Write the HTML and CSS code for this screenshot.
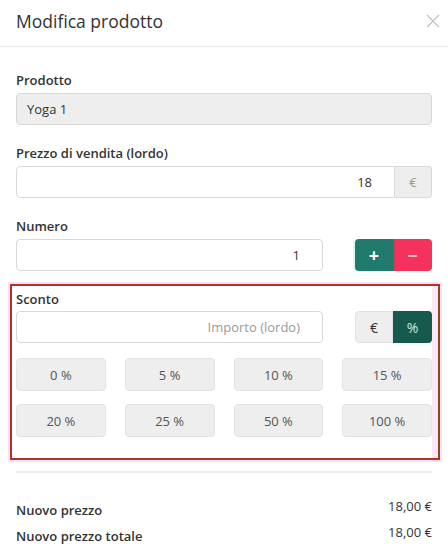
FILE: index.html
```html
<!DOCTYPE html>
<html lang="it">
<head>
    <meta charset="UTF-8">
    <meta name="viewport" content="width=device-width, initial-scale=1.0">
    <title>Modifica prodotto</title>
    <link rel="stylesheet" href="styles.css">
</head>
<body>
    <div class="modal">
        <div class="modal-header">
            <h2 class="modal-title">Modifica prodotto</h2>
            <button class="close-btn" aria-label="Chiudi">
                <svg width="14" height="14" viewBox="0 0 14 14">
                    <path d="M1 1 L13 13 M13 1 L1 13" stroke="#c4c4c4" stroke-width="1.4" fill="none"/>
                </svg>
            </button>
        </div>

        <div class="modal-body">
            <div class="form-group">
                <label class="form-label">Prodotto</label>
                <div class="input readonly">Yoga 1</div>
            </div>

            <div class="form-group">
                <label class="form-label">Prezzo di vendita (lordo)</label>
                <div class="input-group">
                    <input class="input right" type="text" value="18">
                    <span class="addon">€</span>
                </div>
            </div>

            <div class="form-group">
                <label class="form-label">Numero</label>
                <div class="row">
                    <input class="input right" type="text" value="1">
                    <div class="btn-pair">
                        <button class="btn btn-plus">+</button>
                        <button class="btn btn-minus">&minus;</button>
                    </div>
                </div>
            </div>

            <div class="form-group sconto">
                <label class="form-label">Sconto</label>
                <div class="row">
                    <input class="input right" type="text" placeholder="Importo (lordo)">
                    <div class="btn-pair">
                        <button class="btn btn-euro">€</button>
                        <button class="btn btn-percent">%</button>
                    </div>
                </div>
                <div class="presets">
                    <button class="preset">0 %</button>
                    <button class="preset">5 %</button>
                    <button class="preset">10 %</button>
                    <button class="preset">15 %</button>
                    <button class="preset">20 %</button>
                    <button class="preset">25 %</button>
                    <button class="preset">50 %</button>
                    <button class="preset">100 %</button>
                </div>
            </div>

            <div class="totals">
                <div class="total-row">
                    <span>Nuovo prezzo</span>
                    <span class="total-value">18,00 €</span>
                </div>
                <div class="total-row">
                    <span>Nuovo prezzo totale</span>
                    <span class="total-value">18,00 €</span>
                </div>
            </div>
        </div>
    </div>
</body>
</html>
```

FILE: styles.css
```css
* {
    box-sizing: border-box;
}
body {
    margin: 0;
    font-family: "Open Sans", Arial, sans-serif;
    color: #333;
    background: white;
}
.modal-header {
    display: flex;
    align-items: center;
    justify-content: space-between;
    height: 47px;
    padding: 0 8px 5px 16px;
    border-bottom: 1px solid #e8e8e8;
}
.modal-title {
    margin: 0;
    font-size: 17.5px;
    font-weight: 400;
    color: #333;
}
.close-btn {
    background: none;
    border: none;
    padding: 0;
    width: 14px;
    height: 14px;
    display: flex;
}
.modal-body {
    padding: 24px 16px 0 16px;
}
.form-group {
    margin-bottom: 19px;
}
.form-label {
    display: block;
    font-size: 13px;
    font-weight: 600;
    line-height: 18px;
    margin-bottom: 4px;
    color: #333;
}
.input {
    display: block;
    width: 100%;
    height: 32px;
    padding: 0 10px;
    font-family: inherit;
    font-size: 13px;
    color: #333;
    background: white;
    border: 1px solid #d9d9d9;
    border-radius: 4px;
    line-height: 30px;
}
.input.readonly {
    background: #eee;
}
.input.right {
    text-align: right;
    padding-right: 22px;
}
.input::placeholder {
    color: #999;
}
.input-group {
    display: flex;
}
.input-group .input {
    flex: 1;
    border-radius: 4px 0 0 4px;
}
.addon {
    width: 37px;
    height: 32px;
    display: flex;
    align-items: center;
    justify-content: center;
    background: #eee;
    border: 1px solid #d9d9d9;
    border-left: none;
    border-radius: 0 4px 4px 0;
    color: #999;
    font-size: 13px;
}
.row {
    display: flex;
    gap: 32px;
}
.row .input {
    flex: 1;
}
.btn-pair {
    display: flex;
}
.btn {
    width: 38px;
    height: 32px;
    border: none;
    font-family: inherit;
    font-size: 14px;
    display: flex;
    align-items: center;
    justify-content: center;
    padding: 0;
}
.btn-pair .btn:first-child {
    border-radius: 4px 0 0 4px;
}
.btn-pair .btn:last-child {
    border-radius: 0 4px 4px 0;
    width: 39px;
}
.btn-plus {
    background: #217b6d;
    color: white;
    font-weight: 700;
    font-size: 18px;
    box-shadow: -2px 0 0 #d8fbf7, 0 1px 0 #d8fbf7;
}
.btn-minus {
    background: #f4325d;
    color: #fbd0da;
    font-weight: 700;
    font-size: 18px;
    box-shadow: inset 2px 0 0 #c9394f;
}
.btn-euro {
    background: #eee;
    color: #333;
    border: 1px solid #e2e2e2;
}
.btn-percent {
    background: #165a4e;
    color: #cde9e2;
}
.sconto {
    margin: -6px -8px 11px -6px;
    padding: 4px 6px 21px 4px;
    border: 2px solid #b23322;
    border-right-color: #8a4a1c;
    outline: 2px solid #fde0f6;
    box-shadow: inset -6px 0 0 #fde7f7;
}
.sconto .form-label {
    margin-bottom: 3px;
}
.presets {
    display: grid;
    grid-template-columns: repeat(4, 1fr);
    gap: 13px 19px;
    margin-top: 15px;
}
.preset {
    height: 33px;
    background: #eee;
    border: 1px solid #e3e3e3;
    border-radius: 4px;
    font-family: inherit;
    font-size: 13px;
    color: #555;
}
.totals {
    border-top: 2px solid #f0f0f0;
    padding-top: 24px;
}
.total-row {
    display: flex;
    justify-content: space-between;
    align-items: flex-start;
    font-size: 13px;
    font-weight: 600;
    line-height: 26px;
    color: #333;
}
.total-value {
    font-weight: 500;
    margin-top: -4px;
}
```
